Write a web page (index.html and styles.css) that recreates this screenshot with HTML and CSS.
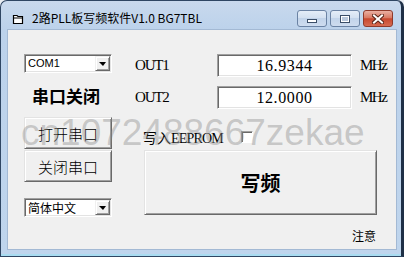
FILE: index.html
```html
<!DOCTYPE html>
<html lang="zh-CN">
<head>
    <meta charset="UTF-8">
    <title>2路PLL板写频软件V1.0 BG7TBL</title>
    <link rel="stylesheet" href="styles.css">
</head>
<body>
    <div class="window">
        <div class="titlebar">
            <svg class="app-icon" width="12" height="12" viewBox="0 0 12 12">
                <path d="M1.5 2.5 H5 L6 3.5 H10.5 V10.5 H1.5 Z" fill="#fff" stroke="#000" stroke-width="1.2"/>
                <path d="M1.5 5 H10.5" stroke="#000" stroke-width="1"/>
            </svg>
            <span class="title">2路PLL板写频软件V1.0 BG7TBL</span>
            <div class="caption">
                <div class="cap-btn"><span class="min-glyph"></span></div>
                <div class="cap-btn"><span class="max-glyph"></span></div>
                <div class="cap-btn close">
                    <svg width="12" height="10" viewBox="0 0 12 10">
                        <path d="M2 1.5 L10 8.5 M10 1.5 L2 8.5" stroke="#5a2418" stroke-width="4" stroke-linecap="square"/>
                        <path d="M2 1.5 L10 8.5 M10 1.5 L2 8.5" stroke="#fff" stroke-width="2" stroke-linecap="square"/>
                    </svg>
                </div>
            </div>
        </div>

        <div class="client">
            <div class="left-col">
                <div class="combo">
                    <span class="combo-text port-text">COM1</span>
                    <span class="combo-arrow"></span>
                </div>
                <div class="status">串口关闭</div>
                <button class="btn port-btn">打开串口</button>
                <button class="btn port-btn">关闭串口</button>
                <div class="combo lang-combo">
                    <span class="combo-text lang-text">简体中文</span>
                    <span class="combo-arrow"></span>
                </div>
            </div>

            <div class="right-col">
                <div class="freq-row">
                    <span class="freq-label">OUT1</span>
                    <div class="freq-box">16.9344</div>
                    <span class="unit">MHz</span>
                </div>
                <div class="freq-row">
                    <span class="freq-label">OUT2</span>
                    <div class="freq-box">12.0000</div>
                    <span class="unit">MHz</span>
                </div>
                <div class="eeprom-row">
                    <span class="eeprom-label">写入<span class="eeprom-latin">EEPROM</span></span>
                    <span class="checkbox"></span>
                </div>
                <button class="btn write-btn">写频</button>
                <div class="note">注意</div>
            </div>

            <div class="watermark">cn1072488667zekae</div>
        </div>
    </div>
</body>
</html>
```

FILE: styles.css
```css
body {
    margin: 0;
    background-color: #e9edf2;
    font-family: "Noto Sans CJK SC", sans-serif;
    color: #000000;
}

.window {
    width: 404px;
    height: 257px;
    box-sizing: border-box;
    border: 1px solid #2f4663;
    border-right: 3px solid #1f3047;
    border-radius: 7px 7px 0 0;
    background: linear-gradient(#c9d9ed, #bcd2eb 28px, #bfd5ed);
    box-shadow: inset 0 -2px 0 #a9dcf1;
    display: flex;
    flex-direction: column;
}

/* title bar */

.titlebar {
    height: 28px;
    flex-shrink: 0;
    display: flex;
    align-items: flex-start;
}

.app-icon {
    margin: 12px 0 0 11px;
}

.title {
    margin: 9px 0 0 8px;
    font-size: 12px;
    line-height: 16px;
}

.caption {
    margin: 9px 8px 0 auto;
    display: flex;
    gap: 3px;
}

.cap-btn {
    width: 30px;
    height: 17px;
    box-sizing: border-box;
    border: 1px solid #6b83a4;
    border-radius: 3px;
    background: linear-gradient(#e4edf8, #d4e1f1 45%, #c2d4ea 50%, #cedcef);
    display: flex;
    align-items: center;
    justify-content: center;
}

.cap-btn.close {
    border-color: #8f3a2b;
    background: linear-gradient(#eab0a3, #d97a64 45%, #c8482f 52%, #d66b51);
}

.min-glyph {
    width: 10px;
    height: 4px;
    box-sizing: border-box;
    margin-top: 5px;
    border: 1px solid #3b4e68;
    background-color: #ffffff;
}

.max-glyph {
    width: 10px;
    height: 8px;
    box-sizing: border-box;
    border: 1px solid #3b4e68;
    box-shadow: inset 0 0 0 1px #ffffff;
    background-color: #b9c8dc;
}

/* client area */

.client {
    flex: 1;
    margin: 0 4px 6px 6px;
    border: 1px solid #a3b9d4;
    background-color: #f0f0f0;
    position: relative;
    display: flex;
    padding: 24px 0 0 16px;
}

.left-col {
    width: 88px;
    display: flex;
    flex-direction: column;
}

.right-col {
    margin-left: 23px;
    display: flex;
    flex-direction: column;
}

.combo {
    height: 19px;
    box-sizing: border-box;
    border: 1px solid;
    border-color: #a0a0a0 #ffffff #ffffff #a0a0a0;
    box-shadow: inset 1px 1px 0 #696969, inset -1px -1px 0 #e3e3e3;
    background-color: #ffffff;
    padding: 1px;
    display: flex;
}

.combo-text {
    flex: 1;
    line-height: 15px;
    padding-left: 2px;
}

.port-text {
    font-family: "Liberation Sans Narrow", "Liberation Sans", sans-serif;
    font-size: 11px;
}

.lang-text {
    font-size: 12px;
}

.combo-arrow {
    width: 15px;
    box-sizing: border-box;
    background-color: #f0f0f0;
    border: 1px solid;
    border-color: #f0f0f0 #696969 #696969 #f0f0f0;
    box-shadow: inset 1px 1px 0 #ffffff, inset -1px -1px 0 #a0a0a0;
    display: flex;
    align-items: center;
    justify-content: center;
}

.combo-arrow::after {
    content: "";
    border-left: 4px solid transparent;
    border-right: 3px solid transparent;
    border-top: 4px solid #000000;
}

.status {
    height: 44px;
    display: flex;
    align-items: center;
    padding-left: 8px;
    font-size: 17px;
    font-weight: bold;
}

.btn {
    padding: 0;
    background-color: #f0f0f0;
    border: 1px solid;
    border-color: #e3e3e3 #696969 #696969 #e3e3e3;
    box-shadow: inset 1px 1px 0 #ffffff, inset -1px -1px 0 #a0a0a0;
    font-family: "Noto Sans CJK SC", sans-serif;
    color: #000000;
}

.port-btn {
    height: 32px;
    font-size: 15px;
    font-weight: 300;
}

.port-btn + .port-btn {
    margin-top: 1px;
}

.lang-combo {
    margin-top: 16px;
}

/* frequency rows */

.freq-row {
    height: 23px;
    display: flex;
    align-items: center;
    font-family: "Liberation Serif", serif;
}

.freq-row + .freq-row {
    margin-top: 9px;
}

.freq-label {
    width: 82px;
    font-size: 15px;
    letter-spacing: -1.2px;
}

.freq-box {
    width: 135px;
    height: 23px;
    box-sizing: border-box;
    border: 1px solid;
    border-color: #a0a0a0 #ffffff #ffffff #a0a0a0;
    box-shadow: inset 1px 1px 0 #696969, inset -1px -1px 0 #e3e3e3;
    background-color: #ffffff;
    text-align: center;
    font-size: 16px;
    line-height: 21px;
    letter-spacing: 0.6px;
}

.unit {
    margin-left: 8px;
    font-size: 15px;
    letter-spacing: -1.5px;
}

.eeprom-row {
    margin-top: 16px;
    height: 24px;
    padding-left: 8px;
    display: flex;
    align-items: center;
    font-size: 14px;
}

.eeprom-label {
    width: 98px;
}

.eeprom-latin {
    font-family: "Liberation Serif", serif;
    font-size: 14px;
    letter-spacing: -0.8px;
}

.checkbox {
    width: 12px;
    height: 12px;
    box-sizing: border-box;
    border: 1px solid;
    border-color: #a0a0a0 #ffffff #ffffff #a0a0a0;
    box-shadow: inset 1px 1px 0 #696969;
    background-color: #ffffff;
}

.write-btn {
    margin: 1px 0 0 9px;
    width: 233px;
    height: 65px;
    font-size: 20px;
    font-weight: bold;
}

.note {
    margin: 11px 0 0 9px;
    width: 232px;
    text-align: right;
    font-size: 12px;
    line-height: 20px;
}

.watermark {
    position: absolute;
    left: 13px;
    top: 84px;
    font-family: "Liberation Sans", sans-serif;
    font-size: 37px;
    line-height: 1;
    color: rgba(140, 140, 140, 0.42);
    white-space: nowrap;
    pointer-events: none;
}
```
